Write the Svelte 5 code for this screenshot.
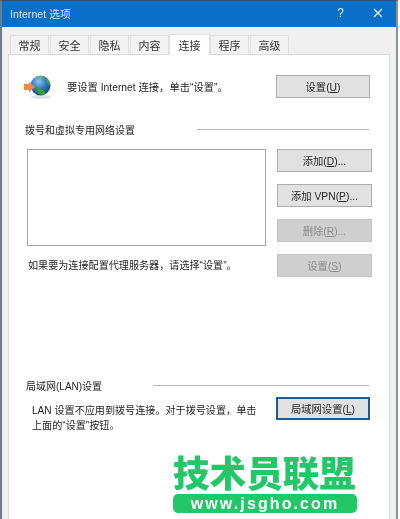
<script>
  const tabs = ['常规', '安全', '隐私', '内容', '连接', '程序', '高级']
  const active = '连接'
  const dialButtons = [
    { label: '添加', key: 'D', more: true },
    { label: '添加 VPN', key: 'P', more: true },
    { label: '删除', key: 'R', more: true, off: true },
    { label: '设置', key: 'S', off: true },
  ]
</script>

<div class="window">
  <header class="titlebar">
    <span class="title">Internet 选项</span>
    <span class="help">?</span>
    <svg class="close" width="10" height="10" viewBox="0 0 10 10">
      <path d="M1 1l8 8M9 1l-8 8" stroke="#fff" stroke-width="1.1" fill="none" />
    </svg>
  </header>

  <div class="body">
    <nav class="tabs">
      {#each tabs as tab}
        <span class="tab" class:active={tab === active}>{tab}</span>
      {/each}
    </nav>

    <main class="panel">
      <section class="setup">
        <svg class="globe" width="30" height="26" viewBox="0 0 30 26">
          <defs>
            <radialGradient id="sea" cx="0.4" cy="0.3" r="0.8">
              <stop offset="0" stop-color="#8cc4ee" />
              <stop offset="0.55" stop-color="#1f6fc0" />
              <stop offset="1" stop-color="#123f86" />
            </radialGradient>
          </defs>
          <ellipse cx="17" cy="23" rx="10" ry="2" fill="#dfe3e7" />
          <circle cx="16.500" cy="11.500" r="10" fill="url(#sea)" />
          <path d="M12 14c3-1 7 1 9 4 1 1-1 3-3 3-3 0-6-3-6-7z" fill="#3f9a33" />
          <path d="M22 4c2 1 4 4 4 7-2 0-4-3-4-7z" fill="#4da53a" />
          <path d="M13 3c2-1 5-1 6 0-1 2-4 2-6 0z" fill="#7fc05a" />
          <path d="M0 10h5V7.500l6 5.500-6 5.500V16H0z" fill="#ee8a45" />
        </svg>
        <p class="setup-text">要设置 Internet 连接，单击“设置”。</p>
        <button class="btn">设置(<u>U</u>)</button>
      </section>

      <div class="legend dial-legend">
        <span>拨号和虚拟专用网络设置</span>
        <i class="rule"></i>
      </div>

      <section class="dial">
        <div class="dial-left">
          <div class="listbox"></div>
          <p class="proxy">如果要为连接配置代理服务器，请选择“设置”。</p>
        </div>
        <div class="dial-buttons">
          {#each dialButtons as b}
            <button class="btn" class:off={b.off}>{b.label}(<u>{b.key}</u>){b.more ? '...' : ''}</button>
          {/each}
        </div>
      </section>

      <div class="legend lan-legend">
        <span>局域网(LAN)设置</span>
        <i class="rule"></i>
      </div>

      <section class="lan">
        <p>LAN 设置不应用到拨号连接。对于拨号设置，单击<br />上面的“设置”按钮。</p>
        <button class="btn focus">局域网设置(<u>L</u>)</button>
      </section>
    </main>
  </div>

  <div class="mark">
    <strong>技术员联盟</strong>
    <span>www.jsgho.com</span>
  </div>
</div>

<style>
  :global(body) {
    background: #fff;
  }
  .window {
    position: relative;
    width: 398px;
    height: 519px;
    box-sizing: border-box;
    overflow: hidden;
    display: flex;
    flex-direction: column;
    background: #f0f0f0;
    border-left: 2px solid #6f7a84;
    border-right: 2px solid #8b9299;
    border-top: 1px solid #2a4f78;
    font-family: "Liberation Sans", "Noto Sans CJK SC", sans-serif;
    font-size: 10.3px;
    color: #262626;
    filter: blur(0.35px);
  }
  .titlebar {
    flex: none;
    height: 26px;
    display: flex;
    align-items: center;
    padding: 0 13px 2px 8px;
    box-sizing: border-box;
    background: #0a6fc9;
    color: #cfe3f5;
    font-size: 10.7px;
  }
  .title {
    flex: 1;
  }
  .help {
    margin-right: 29px;
    color: #dcecf9;
    font-size: 12px;
  }
  .body {
    flex: 1;
    display: flex;
    flex-direction: column;
    padding: 8px 6px 0 6px;
    min-height: 0;
  }
  .tabs {
    flex: none;
    height: 19px;
    display: flex;
    padding-left: 2px;
    align-items: flex-end;
  }
  .tab {
    width: 39px;
    height: 19px;
    box-sizing: border-box;
    border: 1px solid #e0e0e0;
    border-bottom: none;
    display: flex;
    align-items: center;
    justify-content: center;
    background: #f2f2f2;
    margin-right: 1px;
    font-size: 11px;
    color: #333;
  }
  .tab.active {
    width: 41px;
    height: 21px;
    margin: 0 0 -1px -1px;
    background: #fff;
    position: relative;
    z-index: 1;
  }
  .panel {
    flex: 1;
    background: #fff;
    border: 1px solid #dadada;
    border-bottom: none;
    padding: 20px 19px 0 16px;
    min-height: 0;
  }
  .panel p {
    margin: 0;
  }
  .setup {
    display: flex;
    align-items: center;
    height: 23px;
  }
  .globe {
    flex: none;
    margin: 0 13px 0 -1px;
  }
  .setup-text {
    flex: 1;
  }
  .btn {
    box-sizing: border-box;
    width: 94px;
    height: 23px;
    padding: 0;
    border: 1px solid #adadad;
    background: #e1e1e1;
    color: #262626;
    font: inherit;
    white-space: nowrap;
  }
  .btn.off {
    background: #cfcfcf;
    border-color: #c4c4c4;
    color: #8c8c8c;
  }
  .btn.focus {
    border: 2px solid #1f5c92;
  }
  .legend {
    display: flex;
    align-items: center;
    height: 14px;
    margin-right: 1px;
    font-size: 10px;
  }
  .rule {
    flex: 1;
    height: 1px;
    background: #b5b5b5;
  }
  .dial-legend {
    margin-top: 24px;
  }
  .dial-legend span {
    width: 172px;
  }
  .dial {
    margin: 13px -2px 0 2px;
    display: flex;
    justify-content: space-between;
  }
  .listbox {
    box-sizing: border-box;
    width: 239px;
    height: 97px;
    border: 1px solid #a8a8a8;
  }
  .dial-buttons {
    display: flex;
    flex-direction: column;
    gap: 12px;
  }
  .dial-buttons .btn {
    width: 95px;
  }
  .panel .proxy {
    margin: 13px 0 0 1px;
    line-height: 14px;
    font-size: 10.1px;
    white-space: nowrap;
  }
  .lan-legend {
    margin-top: 101px;
  }
  .lan-legend span {
    width: 127px;
    margin-left: 1px;
  }
  .lan {
    margin-top: 5px;
    display: flex;
    justify-content: space-between;
    align-items: flex-start;
    padding-left: 7px;
  }
  .panel .lan p {
    margin-top: 7px;
    font-size: 10.1px;
    line-height: 14.5px;
  }
  .mark {
    position: absolute;
    left: 171px;
    top: 450px;
    width: 184px;
    display: flex;
    flex-direction: column;
    align-items: stretch;
    color: #22c768;
  }
  .mark strong {
    font-family: "Noto Sans CJK SC", sans-serif;
    font-weight: 900;
    font-size: 36.6px;
    line-height: 41px;
    white-space: nowrap;
    text-align: center;
    padding-right: 2px;
  }
  .mark span {
    margin-top: 2px;
    height: 19px;
    border-radius: 5px;
    background: #22c768;
    color: #fff;
    font-family: "Liberation Sans", sans-serif;
    font-weight: 700;
    font-size: 16px;
    line-height: 19px;
    letter-spacing: 2.1px;
    text-align: center;
  }
</style>
